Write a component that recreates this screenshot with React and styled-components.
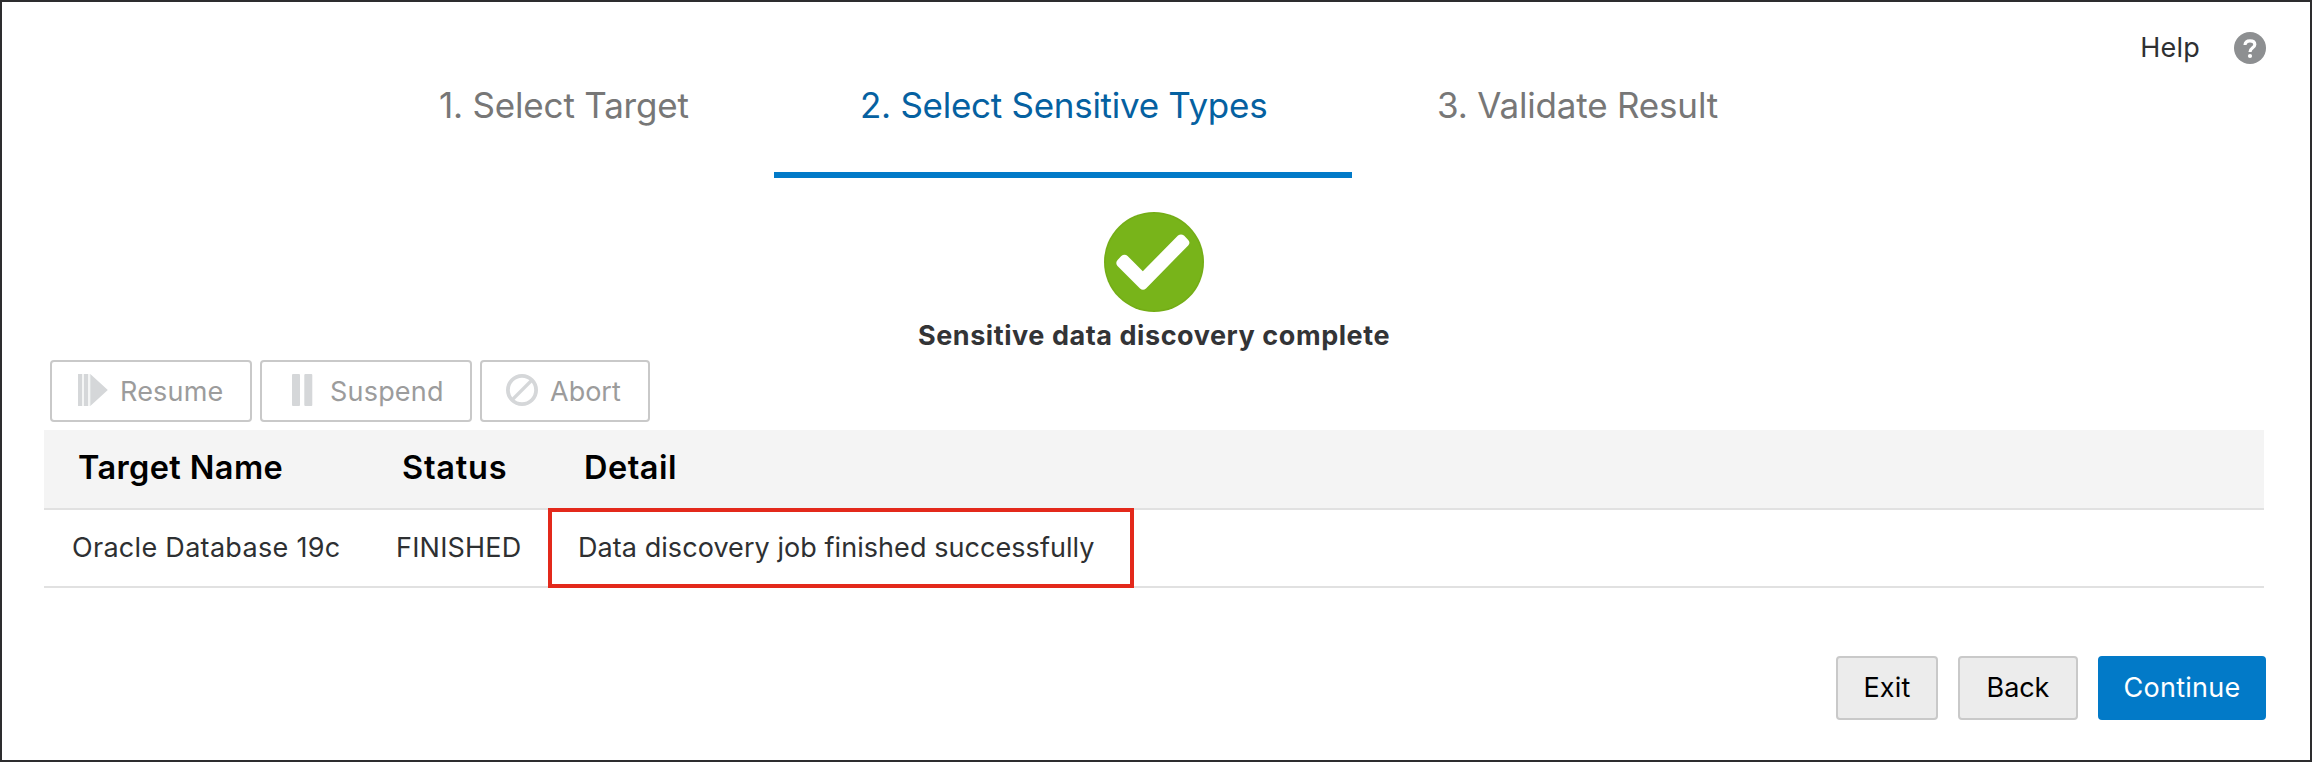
import React from 'react';
import styled, { createGlobalStyle } from 'styled-components';

const GlobalStyle = createGlobalStyle`
  *, *::before, *::after { box-sizing: border-box; }
  body {
    margin: 0;
    background: #fff;
    color: #2e3032;
    font-family: Inter, "Liberation Sans", sans-serif;
    font-size: 27px;
    line-height: 36px;
  }
`;

const Frame = styled.div`
  height: 762px;
  border: 2px solid #2d2d2f;
  background: #fff;
  display: flex;
  flex-direction: column;
  overflow: hidden;
`;

const Header = styled.header`
  display: flex;
  align-items: flex-start;
  height: 176px;
  padding: 0 44px 0 350px;
`;

const Steps = styled.nav`
  display: flex;
  height: 100%;
`;

const Step = styled.div`
  width: ${(p) => p.$width}px;
  padding: 80px 0 0 ${(p) => p.$inset}px;
  border-bottom: 6px solid ${(p) => (p.$active ? '#027ac8' : 'transparent')};
  color: ${(p) => (p.$active ? '#0561a1' : '#777')};
  font-size: 35px;
  line-height: 46px;
  letter-spacing: ${(p) => p.$spacing}px;
  white-space: nowrap;
`;

const Help = styled.div`
  display: flex;
  align-items: center;
  gap: 34px;
  margin-left: auto;
  padding-top: 28px;
`;

const Text = styled.span`
  letter-spacing: ${(p) => p.$spacing ?? 0.2}px;
  white-space: nowrap;
`;

const Content = styled.main`
  display: flex;
  flex-direction: column;
  flex: 1;
  padding: 34px 46px 0 42px;
`;

const Result = styled.section`
  display: flex;
  flex-direction: column;
  align-items: center;
  gap: 6px;
`;

const ResultTitle = styled.h1`
  margin: 0;
  font-size: 27px;
  line-height: 36px;
  font-weight: 700;
  letter-spacing: 0.56px;
  color: #333436;
`;

const Icon = styled.svg`
  display: block;
  flex: none;
`;

const Toolbar = styled.div`
  display: flex;
  gap: 8px;
  padding: 6px 0 8px 6px;
`;

const ToolButton = styled.button`
  display: flex;
  align-items: center;
  gap: 12px;
  width: ${(p) => p.$width}px;
  height: 62px;
  padding: 0 24px;
  border: 2px solid #c9c9c9;
  border-radius: 4px;
  background: #fff;
  color: #9c9c9c;
  font: inherit;

  ${Icon} { margin-bottom: 2px; }
  ${Text} { padding-top: 2px; }
`;

const Table = styled.div`
  display: flex;
  flex-direction: column;
`;

const Row = styled.div`
  display: grid;
  grid-template-columns: 324px 182px 1fr;
  align-items: center;
  height: 78px;
  padding-left: 28px;
  border-bottom: 2px solid #e1e1e1;
`;

const HeadRow = styled(Row)`
  height: 80px;
  padding: 0 0 2px 34px;
  background: #f4f4f4;
  color: #000;
  font-size: 32.5px;
  font-weight: 600;
`;

const HighlightedCell = styled.div`
  position: relative;

  &::after {
    content: '';
    position: absolute;
    left: -30px;
    top: -22px;
    width: 586px;
    height: 80px;
    border: 4px solid #e3291b;
  }
`;

const Footer = styled.footer`
  display: flex;
  justify-content: flex-end;
  gap: 20px;
  padding: 68px 0 0;
  margin-right: -2px;
`;

const Button = styled.button`
  width: ${(p) => p.$width}px;
  height: 64px;
  padding: 0;
  border: 2px solid ${(p) => (p.$primary ? '#027ac8' : '#c9c9c9')};
  border-radius: 4px;
  background: ${(p) => (p.$primary ? '#027ac8' : '#ececec')};
  color: ${(p) => (p.$primary ? '#fff' : '#000')};
  font: inherit;
`;

const steps = [
  { label: '1. Select Target', width: 422, inset: 87, spacing: -0.19 },
  { label: '2. Select Sensitive Types', width: 578, inset: 86, spacing: -0.28, active: true },
  { label: '3. Validate Result', width: 451, inset: 85, spacing: -0.18 },
];

const HelpIcon = () => (
  <Icon width="32" height="32" viewBox="0 0 32 32">
    <circle cx="16" cy="16" r="16" fill="#8d8f91" />
    <path
      d="M11 13C11.2 10 13.2 8.8 16 8.8C18.8 8.8 20.8 10 20.8 12.4C20.8 15.8 16 15.6 16 20"
      fill="none"
      stroke="#fff"
      strokeWidth="3.2"
    />
    <circle cx="16" cy="24" r="2.1" fill="#fff" />
  </Icon>
);

const SuccessIcon = () => (
  <Icon width="100" height="100" viewBox="0 0 100 100">
    <circle cx="50" cy="50" r="50" fill="#74ad16" />
    <circle cx="50" cy="50" r="48.5" fill="#78b41a" />
    <path
      d="M17.3 44Q20.5 41.6 23.6 43.9L38.8 59.2L74 23.6Q77 21.2 80 23.6L84 27.8Q86.8 30.8 84.2 33.4L42 76.4Q39 79.2 36 76.4L13.5 54Q11 51 13.6 48Z"
      fill="#fff"
    />
  </Icon>
);

const ResumeIcon = () => (
  <Icon width="32" height="32" viewBox="0 0 32 32" fill="#d5d7d9">
    <path d="M2 0H6V32H2ZM8 0H12V32H8ZM14.3 0L31.8 16L14.3 32Z" />
    <path d="M6 0H8V32H6ZM12 0H14.3V32H12Z" fillOpacity="0.25" />
  </Icon>
);

const SuspendIcon = () => (
  <Icon width="32" height="32" viewBox="0 0 32 32" fill="#d5d7d9">
    <rect x="6" width="8" height="32" rx="1" />
    <rect x="18.3" width="8" height="32" rx="1" />
  </Icon>
);

const AbortIcon = () => (
  <Icon width="32" height="32" viewBox="0 0 32 32" fill="none" stroke="#d5d7d9">
    <circle cx="16" cy="16" r="14.1" strokeWidth="3.8" />
    <path d="M6.5 25.5L25.5 6.5" strokeWidth="3.2" />
  </Icon>
);

export default function App() {
  return (
    <Frame>
      <GlobalStyle />
      <Header>
        <Steps>
          {steps.map((s) => (
            <Step key={s.label} $width={s.width} $inset={s.inset} $spacing={s.spacing} $active={s.active}>
              {s.label}
            </Step>
          ))}
        </Steps>
        <Help>
          <Text>Help</Text>
          <HelpIcon />
        </Help>
      </Header>
      <Content>
        <Result>
          <SuccessIcon />
          <ResultTitle>Sensitive data discovery complete</ResultTitle>
        </Result>
        <Toolbar>
          <ToolButton $width={202}><ResumeIcon /><Text>Resume</Text></ToolButton>
          <ToolButton $width={212}><SuspendIcon /><Text>Suspend</Text></ToolButton>
          <ToolButton $width={170}><AbortIcon /><Text $spacing={0}>Abort</Text></ToolButton>
        </Toolbar>
        <Table>
          <HeadRow>
            <Text $spacing={0.38}>Target Name</Text>
            <Text $spacing={0.8}>Status</Text>
            <Text $spacing={0.5}>Detail</Text>
          </HeadRow>
          <Row>
            <Text $spacing={0.3}>Oracle Database 19c</Text>
            <Text $spacing={0.2}>FINISHED</Text>
            <HighlightedCell>
              <Text $spacing={0.06}>Data discovery job finished successfully</Text>
            </HighlightedCell>
          </Row>
        </Table>
        <Footer>
          <Button $width={102}><Text>Exit</Text></Button>
          <Button $width={120}><Text $spacing={-0.08}>Back</Text></Button>
          <Button $width={168} $primary><Text $spacing={0.26}>Continue</Text></Button>
        </Footer>
      </Content>
    </Frame>
  );
}
